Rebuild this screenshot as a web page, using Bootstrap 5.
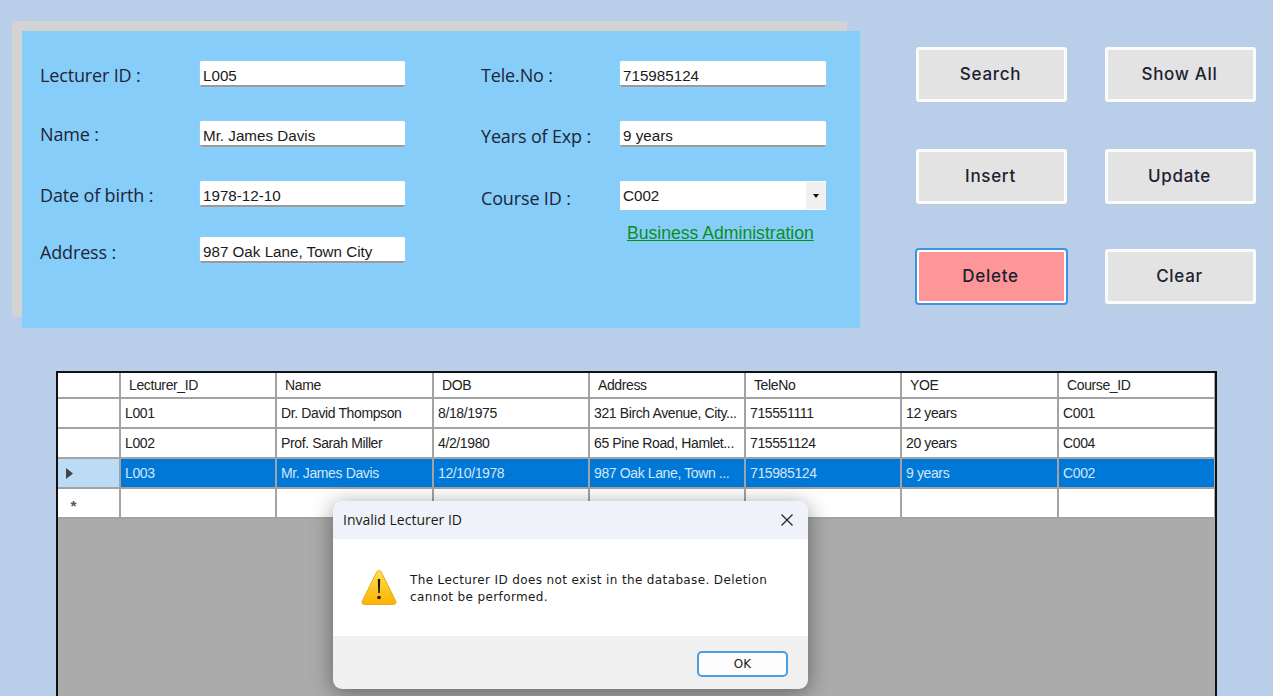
<!DOCTYPE html>
<html lang="en">
<head>
<meta charset="utf-8">
<title>Lecturer</title>
<link href="https://cdn.jsdelivr.net/npm/bootstrap@5.3.0/dist/css/bootstrap.min.css" rel="stylesheet">
<style>
html,body{height:696px;overflow:hidden}
body{background:#b9cfe9;color:#1b2230;position:relative;font-family:"Liberation Sans",sans-serif}
.top-zone{padding:31px 0 0 22px;height:328px}
.form-panel{position:relative;width:838px;height:297px;background:#87cdfa;padding:30px 34px 0 18px}
.form-panel::before{content:"";position:absolute;z-index:-1;left:-10px;top:-10px;width:835px;height:296px;background:#d3d3d3}
.form-col-a{width:365px;margin-right:76px}
.form-col-b{width:345px}
.field-row{height:26px;margin-bottom:34px}
.field-row.tight{margin-bottom:30px}
.field-label{width:160px;font:18px/26px "Open Sans",sans-serif;color:#1c2636;letter-spacing:-.15px;padding-top:2px}
.field-label.low{padding-top:4px}
.field-label.flat{padding-top:0}
.form-col-b .field-label{width:139px}
.win-input.form-control{flex:1;height:26px;border:0;border-radius:2px;border-bottom:2px solid #9a9a9a;padding:4px 3px 0;font:15.2px/22px "Liberation Sans",sans-serif;color:#1a1a1a;background:#fff;box-shadow:0 0 1px #dfe8f0}
.combo-box{flex:1;height:29px;background:#fff;font:15.2px/29px "Liberation Sans",sans-serif;padding-left:3px;color:#1a1a1a}
.combo-btn{width:20px;height:27px;margin-top:1px;background:#f0f0f0}
.combo-btn i{border-top:4px solid #111;border-left:3px solid transparent;border-right:3px solid transparent}
.course-link{display:block;margin:-14px 0 0 146px;font:17.6px/20px "Liberation Sans",sans-serif;color:#0a8f1a;text-decoration:underline;white-space:nowrap}
.action-grid{display:grid;grid-template-columns:151px 151px;column-gap:38px;grid-template-rows:102px 100px 55px;margin:16px 0 0 56px;align-items:start}
.action-btn.btn{height:55px;width:151px;background:#e3e3e3;border:3px solid #fbfbfb;border-radius:3px;font:500 17px/1 "Inter",sans-serif;letter-spacing:.7px;color:#1b2230;box-shadow:0 1px 1px #c4c9d0;padding:0 2px 0 0}
.action-btn.is-delete{background:#fe9598;border-color:#fff;outline:2px solid #3f94df;outline-offset:-1px}
.grid-frame{margin:43px 0 0 56px;width:1161px;height:340px;background:#ababab;border:2px solid #111;border-bottom:0}
.data-table{table-layout:fixed;border-collapse:collapse;width:1156px;font:14px/1 "Liberation Sans",sans-serif;letter-spacing:-.38px;color:#222;background:#fff}
.data-table th,.data-table td{border:2px solid #a3a3a3;padding:0 0 0 4px;height:30px;white-space:nowrap;overflow:hidden;font-weight:400}
.data-table tr{background:#fff}
.data-table thead th{height:25px;padding-left:8px;border-top:0}
.data-table th:first-child,.data-table td:first-child{border-left:0;padding:0}
.data-table th:last-child,.data-table td:last-child{border-right:0}
.data-table .row-head{border-color:#a3a3a3;background:#fff}
.data-table tr.picked td{background:#0078d7;color:#d5e6f6}
.data-table tr.picked td.row-head{background:#bbdcf4}
.row-mark{display:block;margin-left:8px}
.new-mark{display:block;margin-left:11px;font:700 15px/15px "Liberation Mono",monospace;color:#555;padding-top:10px}
.msg-box{position:absolute;left:333px;top:501px;width:475px;height:188px;border-radius:9px;overflow:hidden;background:#f0f0f0;box-shadow:0 4px 22px rgba(0,0,0,.42);display:flex;flex-direction:column}
.msg-title{height:38px;background:#eff2f9;padding:0 15px 0 10px;font:14px/38px "Open Sans",sans-serif;color:#1a1a1a}
.msg-body{height:97px;background:#fff;padding-left:28px;gap:13px}
.msg-text{font:12px/17px "DejaVu Sans",sans-serif;letter-spacing:.37px;color:#1a1a1a;width:375px;margin-top:3px}
.msg-foot{flex:1;padding:15px 20px 0 0}
.msg-ok.btn{width:91px;height:26px;padding:0;background:#fdfdfd;border:2px solid #4d9be0;border-radius:5px;font:12px/1 "DejaVu Sans",sans-serif;color:#1a1a1a}
</style>
</head>
<body>
<div class="top-zone d-flex">
  <div class="form-panel d-flex">
    <div class="form-col-a">
      <div class="field-row d-flex align-items-center"><label class="field-label">Lecturer ID :</label><input class="form-control win-input" value="L005"></div>
      <div class="field-row d-flex align-items-center"><label class="field-label flat">Name :</label><input class="form-control win-input" value="Mr. James Davis"></div>
      <div class="field-row tight d-flex align-items-center"><label class="field-label">Date of birth :</label><input class="form-control win-input" value="1978-12-10"></div>
      <div class="field-row d-flex align-items-center"><label class="field-label low">Address :</label><input class="form-control win-input" value="987 Oak Lane, Town City"></div>
    </div>
    <div class="form-col-b">
      <div class="field-row d-flex align-items-center"><label class="field-label">Tele.No :</label><input class="form-control win-input" value="715985124"></div>
      <div class="field-row d-flex align-items-center"><label class="field-label low">Years of Exp :</label><input class="form-control win-input" value="9 years"></div>
      <div class="field-row tight d-flex align-items-start">
        <label class="field-label flat mt-1">Course ID :</label>
        <div class="combo-box d-flex justify-content-between"><span>C002</span><span class="combo-btn d-flex align-items-center justify-content-center"><i></i></span></div>
      </div>
      <a href="#" class="course-link">Business Administration</a>
    </div>
  </div>
  <div class="action-grid">
    <button class="btn action-btn">Search</button>
    <button class="btn action-btn">Show All</button>
    <button class="btn action-btn">Insert</button>
    <button class="btn action-btn">Update</button>
    <button class="btn action-btn is-delete">Delete</button>
    <button class="btn action-btn">Clear</button>
  </div>
</div>
<div class="grid-frame">
  <table class="data-table">
    <colgroup><col style="width:62px"><col style="width:156px"><col style="width:157px"><col style="width:156px"><col style="width:156px"><col style="width:156px"><col style="width:157px"><col style="width:156px"></colgroup>
    <thead><tr><th></th><th>Lecturer_ID</th><th>Name</th><th>DOB</th><th>Address</th><th>TeleNo</th><th>YOE</th><th>Course_ID</th></tr></thead>
    <tbody>
      <tr><td class="row-head"></td><td>L001</td><td>Dr. David Thompson</td><td>8/18/1975</td><td>321 Birch Avenue, City...</td><td>715551111</td><td>12 years</td><td>C001</td></tr>
      <tr><td class="row-head"></td><td>L002</td><td>Prof. Sarah Miller</td><td>4/2/1980</td><td>65 Pine Road, Hamlet...</td><td>715551124</td><td>20 years</td><td>C004</td></tr>
      <tr class="picked"><td class="row-head"><svg class="row-mark" width="7" height="11" viewBox="0 0 7 11"><path d="M0 0 7 5.500 0 11z" fill="#444"/></svg></td><td>L003</td><td>Mr. James Davis</td><td>12/10/1978</td><td>987 Oak Lane, Town ...</td><td>715985124</td><td>9 years</td><td>C002</td></tr>
      <tr><td class="row-head"><span class="new-mark">*</span></td><td></td><td></td><td></td><td></td><td></td><td></td><td></td></tr>
    </tbody>
  </table>
</div>
<div class="msg-box" role="dialog">
  <div class="msg-title d-flex justify-content-between align-items-center">
    <span>Invalid Lecturer ID</span>
    <svg width="12" height="12" viewBox="0 0 12 12"><path d="M.5.5l11 11M11.5.5l-11 11" stroke="#222" stroke-width="1.2" fill="none"/></svg>
  </div>
  <div class="msg-body d-flex align-items-center">
    <svg width="36" height="37" viewBox="0 0 36 37"><defs><linearGradient id="warn" x1="0" y1="0" x2="0" y2="1"><stop offset="0" stop-color="#ffe050"/><stop offset="1" stop-color="#fdb200"/></linearGradient></defs><path d="M18 1.500c1 0 1.700.5 2.300 1.600L34.700 32c.9 1.900-.1 3.500-2.200 3.500H3.500C1.400 35.500.4 33.900 1.300 32L15.700 3.100C16.300 2 17 1.500 18 1.500z" fill="url(#warn)" stroke="#e8a820" stroke-width="1"/><path d="M16.800 10h2.400l-.4 14h-1.600z" fill="#1a1a1a"/><circle cx="18" cy="28.500" r="1.800" fill="#1a1a1a"/></svg>
    <div class="msg-text">The Lecturer ID does not exist in the database. Deletion cannot be performed.</div>
  </div>
  <div class="msg-foot d-flex justify-content-end align-items-start"><button class="btn msg-ok">OK</button></div>
</div>
</body>
</html>
